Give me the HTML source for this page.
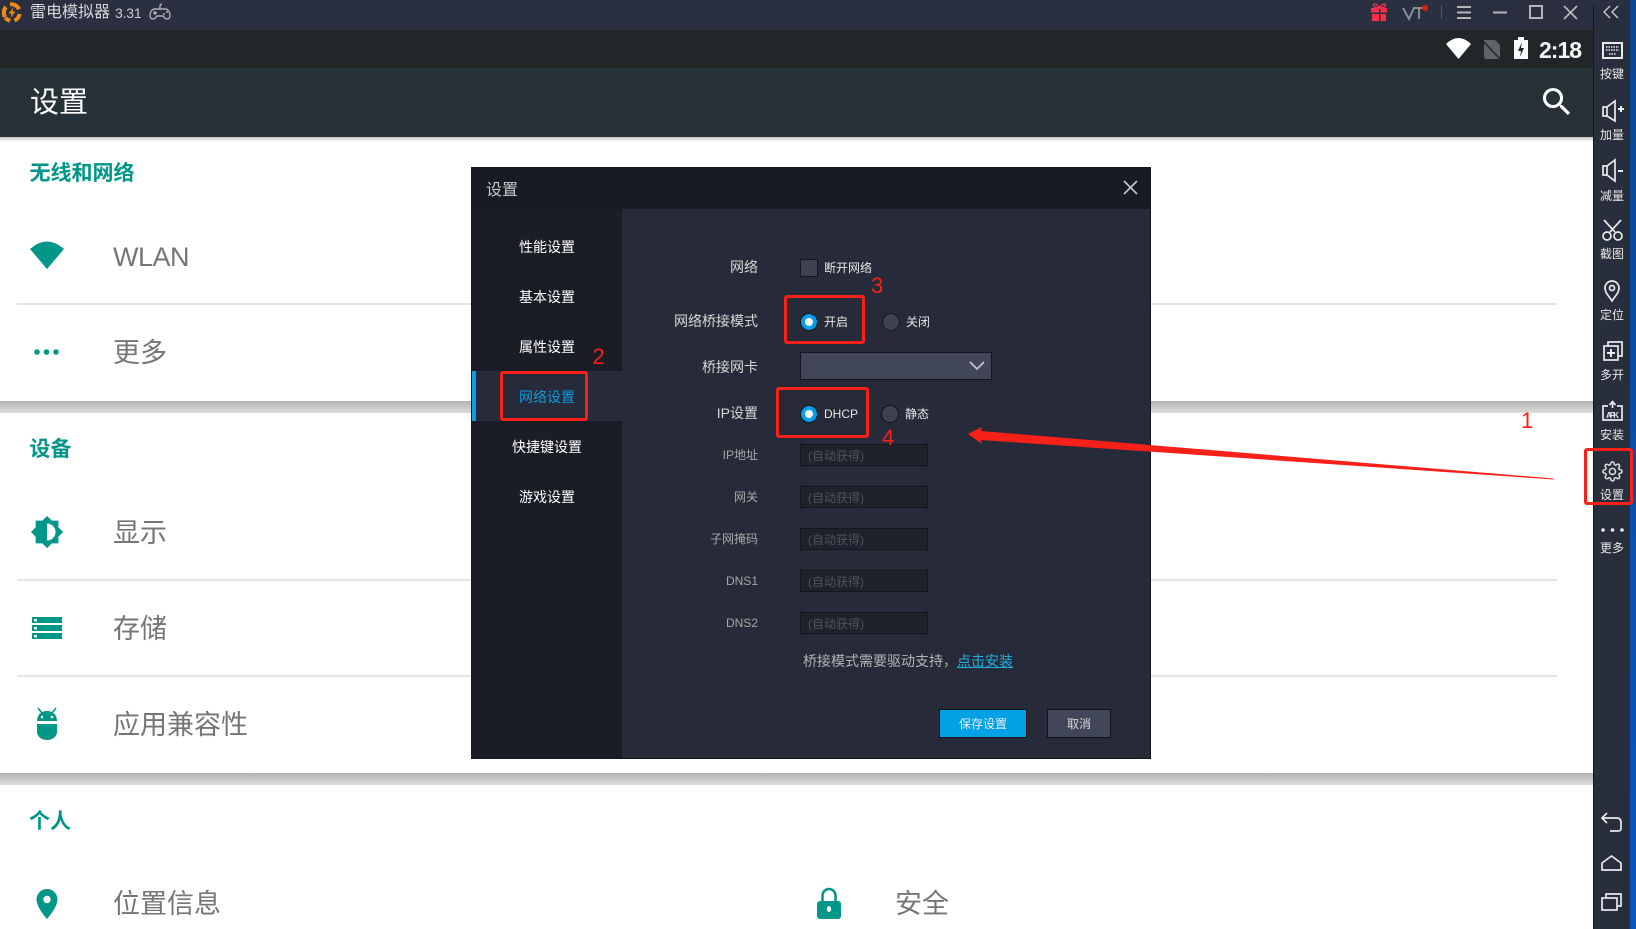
<!DOCTYPE html>
<html lang="zh">
<head>
<meta charset="utf-8">
<title>设置</title>
<style>
html,body{margin:0;padding:0;background:#fff}
body{width:1636px;height:929px;position:relative;overflow:hidden;font-family:"Liberation Sans","Noto Sans CJK SC",sans-serif}
.b{position:absolute}
.t{position:absolute;white-space:nowrap;line-height:1}
.sec{font-size:21px;font-weight:700;color:#009688}
.item{font-size:27px;color:#757575}
.sep{position:absolute;left:17px;width:1540px;height:2px;background:#e4e4e4}
.gap{position:absolute;left:0;width:1593px;height:12px;background:linear-gradient(#b3b3b1,#dcdcdc)}
.nav{font-size:14px;color:#fff;width:151px;left:471.5px;text-align:center}
.lab{font-size:14px;color:#d8d8d8;right:878px}
.lab2{font-size:12px;color:#a8a8a8;right:878px}
.small{font-size:12px;color:#e6e6e6}
.inp{position:absolute;left:800px;width:126px;height:20px;background:#1f212b;border:1px solid #14161d}
.ph{position:absolute;left:7px;top:5px;font-size:12px;line-height:1;color:#50525e;white-space:nowrap}
.sl{font-size:12px;color:#e6e6e6;width:36px;left:1594px;text-align:center}
.red{position:absolute;border:3px solid #f8211a;border-radius:3px;box-sizing:border-box}
.num{font-size:22px;color:#f8211a}
</style>
</head>
<body>
<!-- top bars -->
<div class="b" style="left:0;top:0;width:1636px;height:30px;background:#2a3040"></div>
<div class="b" style="left:0;top:30px;width:1593px;height:38px;background:#212629"></div>
<div class="b" style="left:0;top:68px;width:1593px;height:69px;background:#263238"></div>
<div class="b" style="left:0;top:137px;width:1593px;height:5px;background:linear-gradient(#c4c4c4,#fff)"></div>
<div class="t" style="left:30px;top:5px;font-size:16px;color:#d4d6da">雷电模拟器</div>
<div class="t" style="left:115px;top:6px;font-size:14px;letter-spacing:-.2px;color:#c8cad0">3.31</div>
<div class="t" style="left:1539px;top:39px;font-size:23px;font-weight:700;letter-spacing:-1px;color:#f4f5f5">2:18</div>
<div class="t" style="left:30px;top:89px;font-size:29px;color:#fff">设置</div>

<!-- list -->
<div class="t sec" style="left:29.500px;top:163px">无线和网络</div>
<div class="t" style="left:113px;top:243.500px;font-size:27px;letter-spacing:-.5px;color:#757575">WLAN</div>
<div class="sep" style="top:303px"></div>
<div class="t item" style="left:113px;top:340px">更多</div>
<div class="gap" style="top:401px"></div>
<div class="t sec" style="left:29.500px;top:439px">设备</div>
<div class="t item" style="left:113px;top:520px">显示</div>
<div class="sep" style="top:579px"></div>
<div class="t item" style="left:113px;top:616px">存储</div>
<div class="sep" style="top:675px"></div>
<div class="t item" style="left:113px;top:712px">应用兼容性</div>
<div class="gap" style="top:773px"></div>
<div class="t sec" style="left:29px;top:811px">个人</div>
<div class="t item" style="left:113px;top:891px">位置信息</div>
<div class="t item" style="left:895px;top:891px">安全</div>

<!-- sidebar -->
<div class="b" style="left:1593px;top:6px;width:37px;height:923px;background:#282e3b;border-left:1px solid #14171e;box-sizing:border-box"></div>
<div class="b" style="left:1630px;top:0;width:6px;height:929px;background:linear-gradient(#0b4691,#0a56c0)"></div>
<div class="t sl" style="top:68px">按键</div>
<div class="t sl" style="top:128.500px">加量</div>
<div class="t sl" style="top:189.500px">减量</div>
<div class="t sl" style="top:248px">截图</div>
<div class="t sl" style="top:309px">定位</div>
<div class="t sl" style="top:369px">多开</div>
<div class="t sl" style="top:429px">安装</div>
<div class="t sl" style="top:489px">设置</div>
<div class="t sl" style="top:541.500px">更多</div>

<!-- dialog -->
<div class="b" style="left:471px;top:167px;width:679px;height:591px;background:#272a38;border-right:1px solid #14161c;border-bottom:1px solid #14161c"></div>
<div class="b" style="left:471px;top:167px;width:680px;height:42px;background:#181b24"></div>
<div class="b" style="left:471px;top:209px;width:151px;height:549px;background:#1a1d26"></div>
<div class="b" style="left:472px;top:371px;width:150px;height:50px;background:#272a38"></div>
<div class="b" style="left:472px;top:371px;width:4px;height:50px;background:#0a9de8"></div>
<div class="t" style="left:486px;top:182.500px;font-size:16px;color:#c8c8c8">设置</div>
<div class="t nav" style="top:240px">性能设置</div>
<div class="t nav" style="top:290px">基本设置</div>
<div class="t nav" style="top:340px">属性设置</div>
<div class="t nav" style="top:390px;color:#0f9be0">网络设置</div>
<div class="t nav" style="top:440px">快捷键设置</div>
<div class="t nav" style="top:490px">游戏设置</div>

<div class="t lab" style="top:260px">网络</div>
<div class="t lab" style="top:314px">网络桥接模式</div>
<div class="t lab" style="top:360px">桥接网卡</div>
<div class="t lab" style="top:406px">IP设置</div>
<div class="t lab2" style="top:449px">IP地址</div>
<div class="t lab2" style="top:491px">网关</div>
<div class="t lab2" style="top:533px">子网掩码</div>
<div class="t lab2" style="top:574.500px">DNS1</div>
<div class="t lab2" style="top:616.500px">DNS2</div>

<div class="b" style="left:800px;top:259px;width:16px;height:16px;background:#3d4150;border:1px solid #14161d"></div>
<div class="t small" style="left:824px;top:261.500px">断开网络</div>
<div class="t small" style="left:824px;top:316px">开启</div>
<div class="t small" style="left:906px;top:316px">关闭</div>
<div class="b" style="left:800px;top:352px;width:190px;height:26px;background:#424659;border:1px solid #14161d"></div>
<div class="t small" style="left:824px;top:407.500px">DHCP</div>
<div class="t small" style="left:905px;top:408px">静态</div>

<div class="inp" style="top:444px"><span class="ph">(自动获得)</span></div>
<div class="inp" style="top:486px"><span class="ph">(自动获得)</span></div>
<div class="inp" style="top:528px"><span class="ph">(自动获得)</span></div>
<div class="inp" style="top:570px"><span class="ph">(自动获得)</span></div>
<div class="inp" style="top:612px"><span class="ph">(自动获得)</span></div>

<div class="t" style="left:803px;top:654px;font-size:14px;color:#b4b4b4">桥接模式需要驱动支持<span style="font-family:'Noto Sans CJK TC',sans-serif">，</span><span style="color:#1fb2e0;text-decoration:underline">点击安装</span></div>
<div class="b" style="left:939px;top:709px;width:86px;height:27px;background:#03a1e5;border:1px solid #10131a"></div>
<div class="t small" style="left:959px;top:717.500px;color:#e8eef2">保存设置</div>
<div class="b" style="left:1047px;top:709px;width:62px;height:27px;background:#424659;border:1px solid #10131a"></div>
<div class="t small" style="left:1067px;top:717.500px;color:#d8d8d8">取消</div>

<!-- icons -->
<svg class="b" style="left:0;top:0" width="1636" height="929" viewBox="0 0 1636 929">
  <!-- logo -->
  <path d="M5 17a8.500 8.500 0 0 1 1-10M10 4.300a8.500 8.500 0 0 1 9 5M19.500 14a8.500 8.500 0 0 1-5 6.500M10 21l-5-3" fill="none" stroke="#f08a14" stroke-width="4"/>
  <path d="M13.500 7.500l-5 6h3l-1 4.500 5-6.500h-3z" fill="#f08a14"/>
  <!-- gamepad -->
  <g fill="none" stroke="#aeb2b8" stroke-width="1.400">
    <path d="M155 9h10c3 0 5 3 5 6s-1 4-3 4-3-2-4-3h-6c-1 1-2 3-4 3s-3-1-3-4 2-6 5-6z"/>
    <path d="M160 9V6c0-1 1-2 2-2"/>
    <path d="M153 13h4M155 11v4"/>
  </g>
  <circle cx="164" cy="14" r="1" fill="#aeb2b8"/><circle cx="167" cy="12" r="1" fill="#aeb2b8"/>
  <!-- gift -->
  <path d="M1371 8h16v5h-16zM1372 14h14v7h-14z" fill="#f92f4c"/>
  <path d="M1379 8h1.500v13H1379zM1371 12.500h16v1.500h-16z" fill="#2a3040"/>
  <path d="M1379.500 8c-2-4-6-5-6-3s3 3 6 3c3 0 6-1 6-3s-4-1-6 3z" fill="none" stroke="#f92f4c" stroke-width="1.300"/>
  <!-- VT -->
  <path d="M1403 8l6 11 5-11M1413 8h12M1419 8v11" fill="none" stroke="#868d98" stroke-width="2"/>
  <circle cx="1425" cy="8" r="3" fill="#d4201c"/>
  <path d="M1441.500 5v14" stroke="#4d5a6e" stroke-width="1"/>
  <path d="M1457 7h14M1457 12.500h14M1457 18h14" stroke="#b4b6ba" stroke-width="2"/>
  <path d="M1493 12.500h14" stroke="#b4b6ba" stroke-width="2"/>
  <rect x="1530" y="6" width="12" height="12" fill="none" stroke="#b4b6ba" stroke-width="2"/>
  <path d="M1564 6l13 13M1577 6l-13 13" stroke="#b4b6ba" stroke-width="1.800"/>
  <!-- status -->
  <path d="M1458.500 59L1446 44Q1458.500 32 1471 44Z" fill="#fff"/>
  <path d="M1484 40h11l5 5v12l-1 2h-14l-1-2z" fill="#5f6468"/>
  <path d="M1482 40l18 19" stroke="#212629" stroke-width="1.500"/>
  <path d="M1518 37h6v3h4v19h-14V40h4z" fill="#fff"/>
  <path d="M1522 42l-4 9h3l-1 6 4-9h-3z" fill="#212629"/>
  <!-- search -->
  <path transform="translate(1538.300 83.300) scale(1.550)" fill="#fff" d="M15.500 14h-.79l-.28-.27A6.471 6.471 0 0 0 16 9.500 6.500 6.500 0 1 0 9.500 16c1.610 0 3.090-.59 4.230-1.570l.27.28v.79l5 4.990L20.490 19l-4.990-5zm-6 0C7.010 14 5 11.990 5 9.500S7.010 5 9.500 5 14 7.010 14 9.500 11.990 14 9.500 14z"/>
  <!-- list icons -->
  <path d="M47 269L30 249Q47 234 64 249Z" fill="#009688"/>
  <circle cx="37" cy="352" r="2.800" fill="#009688"/><circle cx="46.500" cy="352" r="2.800" fill="#009688"/><circle cx="56" cy="352" r="2.800" fill="#009688"/>
  <path transform="translate(30 515) scale(1.420)" fill="#009688" fill-rule="evenodd" d="M20 15.310L23.310 12 20 8.690V4h-4.690L12 .69 8.690 4H4v4.690L.69 12 4 15.310V20h4.690L12 23.310 15.310 20H20v-4.690zM12 18V6c3.310 0 6 2.690 6 6s-2.690 6-6 6z"/>
  <g fill="#009688">
    <rect x="32" y="617" width="30" height="6"/><rect x="32" y="625" width="30" height="6"/><rect x="32" y="633" width="30" height="6"/>
    <path d="M37 721c0-6 4-10 10-10s10 4 10 10z"/>
    <path d="M37 724h20v8a10 8 0 0 1-20 0z"/>
    <path d="M38 708l4 5M56 708l-4 5" stroke="#009688" stroke-width="1.500"/>
    <path transform="translate(29 886) scale(1.500)" fill-rule="evenodd" d="M12 2C8.130 2 5 5.130 5 9c0 5.250 7 13 7 13s7-7.750 7-13c0-3.870-3.130-7-7-7zm0 9.500a2.500 2.500 0 0 1 0-5 2.500 2.500 0 0 1 0 5z"/>
    <rect x="817" y="901" width="24" height="18" rx="3"/>
  </g>
  <rect x="34" y="619" width="3" height="2.500" fill="#fff"/><rect x="34" y="627" width="3" height="2.500" fill="#fff"/><rect x="34" y="635" width="3" height="2.500" fill="#fff"/>
  <circle cx="42" cy="717" r="1.300" fill="#fff"/><circle cx="52" cy="717" r="1.300" fill="#fff"/>
  <path d="M822.500 902v-6.500a6.500 6.500 0 0 1 13 0V902" fill="none" stroke="#009688" stroke-width="2.500"/>
  <ellipse cx="829" cy="909" rx="2.200" ry="3" fill="#fff"/>
  <!-- sidebar icons -->
  <g fill="none" stroke="#e8eaec" stroke-width="1.700">
    <path d="M1610 6l-6 6 6 6M1618 6l-6 6 6 6" stroke="#c8cad0" stroke-width="1.400"/>
    <rect x="1603" y="43" width="19" height="15" stroke-width="2"/>
    <path d="M1606 47h13M1606 50h13M1609 54h7" stroke-width="1.500" stroke-dasharray="1.500 1"/>
    <path d="M1603 107h4v9h-4zM1607 107l8-6v20l-8-5"/>
    <path d="M1603 166h4v9h-4zM1607 166l8-6v21l-8-6"/>
    <path d="M1604 220l11 12M1621 220l-11 12"/>
    <circle cx="1607" cy="236" r="4"/><circle cx="1618" cy="236" r="4"/>
    <path d="M1612 301c-3-5-7-8-7-13a7 7 0 0 1 14 0c0 5-4 8-7 13z"/>
    <circle cx="1612" cy="288" r="2.500"/>
    <rect x="1604" y="346" width="14" height="14"/>
    <path d="M1608 346v-4h14v14h-4"/>
    <path d="M1607 353h8M1611 349v8" stroke-width="2"/>
    <path d="M1608 406h-5v14h19v-14h-5"/>
    <path d="M1612.500 408v-6M1609.500 405l3-3.500 3 3.500"/>
    <path d="M1607 813l-5 5 5 5M1602 818h15c3 0 4 2 4 5v6c0 1-1 2-3 2h-8"/>
    <path d="M1602 870v-7l9.500-7 9.500 7v7z"/>
    <rect x="1602" y="898" width="15" height="12"/>
    <path d="M1606 898v-4h15v12h-4"/>
  </g>
  <g transform="translate(1602 461) scale(.87)" fill="none" stroke="#d8dade" stroke-width="1.800">
    <circle cx="12" cy="12" r="3.500"/>
    <path d="M19.400 15a1.650 1.650 0 0 0 .33 1.820l.06.06a2 2 0 0 1 0 2.830 2 2 0 0 1-2.830 0l-.06-.06a1.650 1.650 0 0 0-1.820-.33 1.650 1.650 0 0 0-1 1.510V21a2 2 0 0 1-2 2 2 2 0 0 1-2-2v-.09A1.650 1.650 0 0 0 9 19.400a1.650 1.650 0 0 0-1.820.33l-.06.06a2 2 0 0 1-2.830 0 2 2 0 0 1 0-2.830l.06-.06a1.650 1.650 0 0 0 .33-1.820 1.650 1.650 0 0 0-1.510-1H3a2 2 0 0 1-2-2 2 2 0 0 1 2-2h.09A1.650 1.650 0 0 0 4.600 9a1.650 1.650 0 0 0-.33-1.820l-.06-.06a2 2 0 0 1 0-2.830 2 2 0 0 1 2.830 0l.06.06a1.650 1.650 0 0 0 1.820.33H9a1.650 1.650 0 0 0 1-1.510V3a2 2 0 0 1 2-2 2 2 0 0 1 2 2v.09a1.650 1.650 0 0 0 1 1.510 1.650 1.650 0 0 0 1.820-.33l.06-.06a2 2 0 0 1 2.830 0 2 2 0 0 1 0 2.830l-.06.06a1.650 1.650 0 0 0-.33 1.820V9a1.650 1.650 0 0 0 1.510 1H21a2 2 0 0 1 2 2 2 2 0 0 1-2 2h-.09a1.650 1.650 0 0 0-1.510 1z"/>
  </g>
  <path d="M1618 109h6M1621 106v6" stroke="#e8eaec" stroke-width="2"/>
  <path d="M1618 171h5" stroke="#e8eaec" stroke-width="2"/>
  <circle cx="1603" cy="530" r="1.800" fill="#e8eaec"/><circle cx="1612.500" cy="530" r="1.800" fill="#e8eaec"/><circle cx="1622" cy="530" r="1.800" fill="#e8eaec"/>
  <text x="1606" y="418" font-family="Liberation Sans" font-size="8" font-weight="700" fill="#e8eaec" textLength="13">APK</text>
  <!-- dialog controls -->
  <path d="M1124 181l13 13M1137 181l-13 13" stroke="#c4c6ca" stroke-width="1.600"/>
  <path d="M970 362l7 7 7-7" fill="none" stroke="#c8cad0" stroke-width="1.600"/>
  <circle cx="809" cy="322" r="8.500" fill="#05a0e6" stroke="#14161d"/><circle cx="809" cy="322" r="4" fill="#fff"/>
  <circle cx="891" cy="322" r="8.500" fill="#3d4150" stroke="#14161d"/>
  <circle cx="809" cy="414" r="8.500" fill="#05a0e6" stroke="#14161d"/><circle cx="809" cy="414" r="4" fill="#fff"/>
  <circle cx="890" cy="414" r="8.500" fill="#3d4150" stroke="#14161d"/>
  <!-- red arrow -->
  <path d="M968 434L982 427L981 431L1553.500 478.500L1553.500 479.500L981 440L982 444Z" fill="#f8211a"/>
</svg>

<!-- annotations -->
<div class="red" style="left:500px;top:371px;width:88px;height:50px"></div>
<div class="red" style="left:784px;top:295px;width:81px;height:49px"></div>
<div class="red" style="left:776px;top:387px;width:93px;height:51px"></div>
<div class="red" style="left:1584px;top:448px;width:49px;height:57px"></div>
<div class="t num" style="left:592.500px;top:346px">2</div>
<div class="t num" style="left:871px;top:275px">3</div>
<div class="t num" style="left:882px;top:427px">4</div>
<div class="t num" style="left:1521px;top:410px">1</div>
</body>
</html>
